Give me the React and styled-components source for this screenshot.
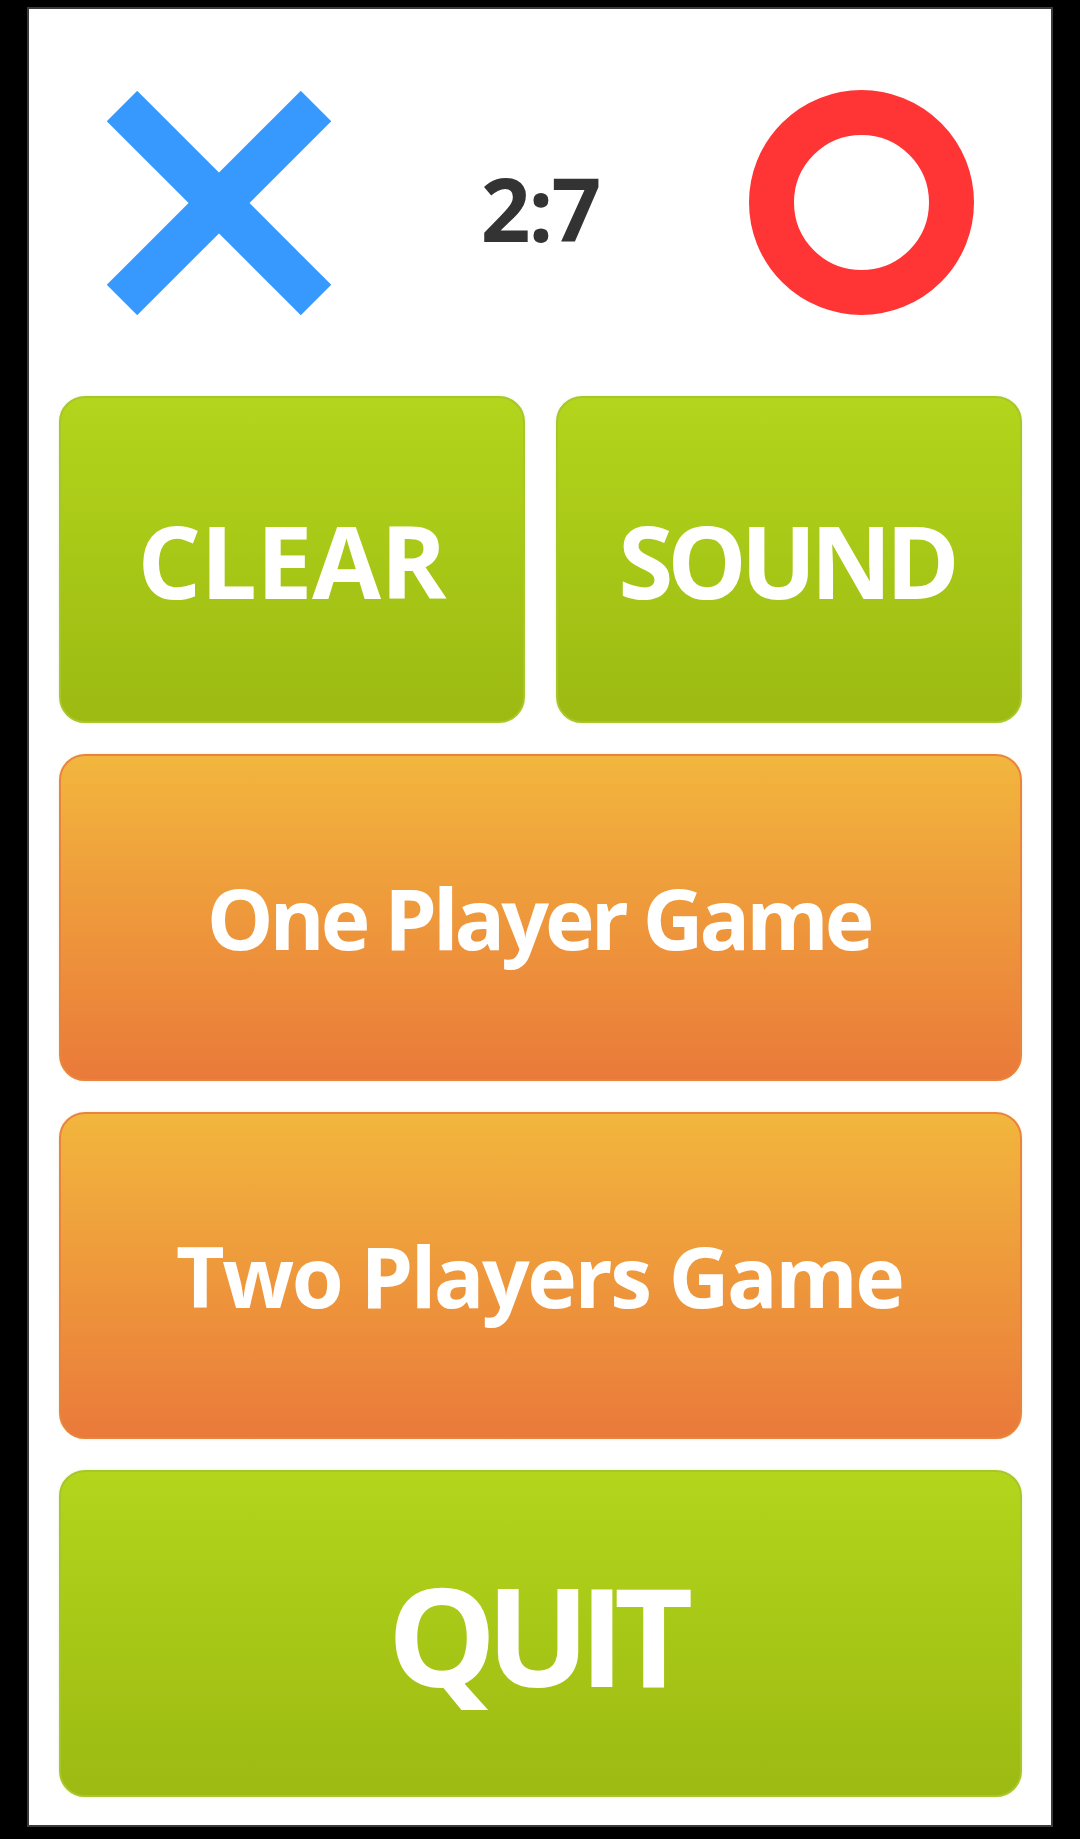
import styled, { createGlobalStyle } from 'styled-components';

const GlobalStyle = createGlobalStyle`
  html, body {
    margin: 0;
    padding: 0;
    background: #000;
  }
  body {
    font-family: "Open Sans", "Noto Sans", sans-serif;
  }
`;

const Frame = styled.div`
  margin: 7px 27px 0;
  height: 1820px;
  box-sizing: border-box;
  border: 2px solid #3b3b3b;
  background: #fff;
  display: flex;
  flex-direction: column;
  padding: 0 29px 28px 30px;
`;

const Header = styled.div`
  height: 387px;
  display: flex;
  align-items: center;
  justify-content: space-between;
  padding: 0 48px;
`;

const Score = styled.div`
  font-family: "Open Sans", "Noto Sans", sans-serif;
  font-weight: 700;
  font-size: 87px;
  color: #333;
  letter-spacing: -2px;
  padding-top: 10px;
`;

const Grid = styled.div`
  display: grid;
  grid-template-columns: 1fr 1fr;
  grid-auto-rows: 327px;
  gap: 31px;
`;

const palettes = {
  green: {
    top: '#b3d51c',
    bottom: '#9cba12',
    border: '#a7c62a',
  },
  orange: {
    top: '#f2b63d',
    bottom: '#ea7a3a',
    border: '#e8843f',
  },
};

const Button = styled.button`
  grid-column: ${(p) => (p.$wide ? '1 / span 2' : 'auto')};
  display: flex;
  align-items: center;
  justify-content: center;
  border-radius: 26px;
  border: 2px solid ${(p) => palettes[p.$tone].border};
  background: linear-gradient(
    to bottom,
    ${(p) => palettes[p.$tone].top},
    ${(p) => palettes[p.$tone].bottom}
  );
  box-shadow: 0 0 3px rgba(200, 210, 120, 0.35);
  color: #fff;
  font-family: "Open Sans", "Noto Sans", sans-serif;
  font-weight: 700;
  font-size: ${(p) => p.$size}px;
  letter-spacing: ${(p) => p.$spacing}px;
  padding: 0 ${(p) => -p.$spacing}px 0 0;
  cursor: pointer;
`;

function CrossMark() {
  return (
    <svg width="224" height="224" viewBox="0 0 224 224">
      <g stroke="#3799fd" strokeWidth="43" strokeLinecap="butt">
        <line x1="15" y1="15" x2="209" y2="209" />
        <line x1="209" y1="15" x2="15" y2="209" />
      </g>
    </svg>
  );
}

function RingMark() {
  return (
    <svg width="225" height="225" viewBox="0 0 225 225">
      <circle cx="112.5" cy="112.5" r="90" fill="none" stroke="#ff3535" strokeWidth="45" />
    </svg>
  );
}

function App() {
  return (
    <>
      <GlobalStyle />
      <Frame>
        <Header>
          <CrossMark />
          <Score>2:7</Score>
          <RingMark />
        </Header>

        <Grid>
          <Button $tone="green" $size={100} $spacing={-0.5}>CLEAR</Button>
          <Button $tone="green" $size={100} $spacing={-6}>SOUND</Button>
          <Button $tone="orange" $size={84} $spacing={-4} $wide>One Player Game</Button>
          <Button $tone="orange" $size={84} $spacing={-2.5} $wide>Two Players Game</Button>
          <Button $tone="green" $size={137} $spacing={-10.5} $wide>QUIT</Button>
        </Grid>
      </Frame>
    </>
  );
}

export default App;
